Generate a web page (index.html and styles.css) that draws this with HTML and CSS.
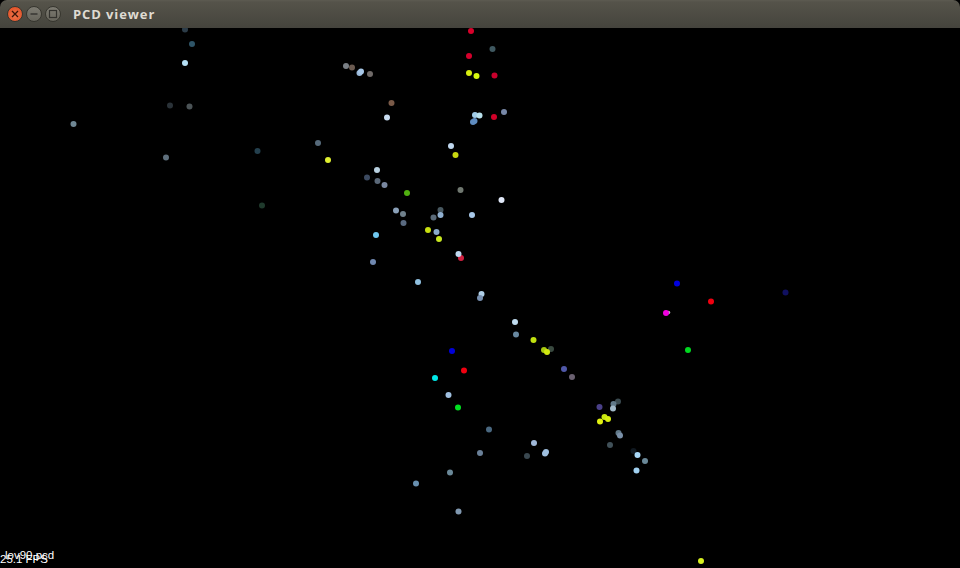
FILE: index.html
```html
<!DOCTYPE html>
<html lang="en">
<head>
<meta charset="utf-8">
<title>PCD viewer</title>
<link rel="stylesheet" href="styles.css">
</head>
<body>
<div class="window">
  <header class="titlebar">
    <div class="controls">
      <span class="btn btn-close"><svg width="10" height="10" viewBox="0 0 10 10"><path d="M2 2 8 8M8 2 2 8" stroke="#3b1508" stroke-width="1.3" fill="none"/></svg></span>
      <span class="btn"><svg width="10" height="10" viewBox="0 0 10 10"><path d="M1.5 5H8.5" stroke="#33322e" stroke-width="1.4" fill="none"/></svg></span>
      <span class="btn"><svg width="10" height="10" viewBox="0 0 10 10"><rect x="1.5" y="1.5" width="7" height="7" stroke="#33322e" stroke-width="1.2" fill="none"/></svg></span>
    </div>
    <span class="title">PCD viewer</span>
  </header>
  <main class="view">
    <svg class="cloud" width="960" height="540" viewBox="0 28 960 540">
      <circle cx="185" cy="29.5" fill="#2c3c48"/><circle cx="192" cy="44" fill="#2f5568"/>
      <circle cx="185" cy="63" fill="#b5e0f5"/><circle cx="170" cy="105.5" fill="#2a3238"/>
      <circle cx="189.5" cy="106.5" fill="#4b5356"/><circle cx="73.5" cy="124" fill="#6f8794"/>
      <circle cx="166" cy="157.5" fill="#5e6f7c"/><circle cx="257.5" cy="151" fill="#24404e"/>
      <circle cx="262" cy="205.5" fill="#1f3a2c"/><circle cx="318" cy="143" fill="#566a7a"/>
      <circle cx="328" cy="160" fill="#e0f030"/><circle cx="346" cy="66" fill="#7a7f85"/>
      <circle cx="352" cy="67.5" fill="#6a5a50"/><circle cx="359.5" cy="73" fill="#9ab8d8"/>
      <circle cx="361" cy="71.5" fill="#a8c8e8"/><circle cx="370" cy="74" fill="#6f6a68"/>
      <circle cx="391.5" cy="103" fill="#7a5a48"/><circle cx="387" cy="117.5" fill="#c8dcf0"/>
      <circle cx="471" cy="31" fill="#d8002a"/><circle cx="492.5" cy="49" fill="#3f5860"/>
      <circle cx="469" cy="56" fill="#d4002c"/><circle cx="469" cy="73" fill="#d8ee10"/>
      <circle cx="476.5" cy="76" fill="#d8f810"/><circle cx="494.5" cy="75.5" fill="#c8002c"/>
      <circle cx="473" cy="122" fill="#5f8cc0"/><circle cx="474.5" cy="121" fill="#5f8cc0"/>
      <circle cx="475" cy="115" fill="#a0cce8"/><circle cx="479.5" cy="115.5" fill="#b8e0ec"/>
      <circle cx="494" cy="117" fill="#d00028"/><circle cx="504" cy="112" fill="#7888a8"/>
      <circle cx="451" cy="146" fill="#c0d8f0"/><circle cx="455.5" cy="155" fill="#c8d810"/>
      <circle cx="377" cy="170" fill="#b8d0e0"/><circle cx="367" cy="177.5" fill="#3c4a60"/>
      <circle cx="377.5" cy="181" fill="#5a6878"/><circle cx="384.5" cy="185" fill="#7a88a0"/>
      <circle cx="407" cy="193" fill="#50b010"/><circle cx="460.5" cy="190" fill="#707870"/>
      <circle cx="501.5" cy="200" fill="#e0e8f8"/><circle cx="396" cy="210.5" fill="#8aa0b8"/>
      <circle cx="403" cy="214" fill="#70808c"/><circle cx="440.5" cy="210" fill="#485860"/>
      <circle cx="433.5" cy="217.5" fill="#5a6a78"/><circle cx="440.5" cy="215" fill="#90b0d0"/>
      <circle cx="472" cy="215" fill="#a8c8e8"/><circle cx="403.5" cy="223" fill="#5a6a80"/>
      <circle cx="428" cy="230" fill="#c8e010"/><circle cx="436.5" cy="232" fill="#88aacc"/>
      <circle cx="439" cy="239" fill="#c8e820"/><circle cx="376" cy="235" fill="#70c8f0"/>
      <circle cx="461" cy="258" fill="#d02040"/><circle cx="458.5" cy="254" fill="#c0d8f0"/>
      <circle cx="373" cy="262" fill="#7088b0"/><circle cx="418" cy="282" fill="#90c0e0"/>
      <circle cx="481.5" cy="294" fill="#b0d0e8"/><circle cx="480" cy="298" fill="#7890b0"/>
      <circle cx="515" cy="322" fill="#c0dcf0"/><circle cx="516" cy="334.5" fill="#6888a0"/>
      <circle cx="533.5" cy="340" fill="#c0e010"/><circle cx="551" cy="349" fill="#3a4a40"/>
      <circle cx="544" cy="350" fill="#a8c810"/><circle cx="547" cy="352" fill="#d0e810"/>
      <circle cx="452" cy="351" fill="#0000d8"/><circle cx="677" cy="283.5" fill="#0000e0"/>
      <circle cx="711" cy="301.5" fill="#f00010"/><circle cx="785.5" cy="292.5" fill="#101060"/>
      <circle class="speck" cx="668.5" cy="312.5" fill="#aaaaaa"/><circle cx="666" cy="313" fill="#f000e0"/>
      <circle cx="688" cy="350" fill="#00d820"/><circle cx="464" cy="370.5" fill="#f00010"/>
      <circle cx="435" cy="378" fill="#00e8e8"/><circle cx="564" cy="369" fill="#5058a8"/>
      <circle cx="572" cy="377" fill="#6a6070"/><circle cx="448.5" cy="395" fill="#a0c0e0"/>
      <circle cx="458" cy="407.5" fill="#00e020"/><circle cx="489" cy="429.5" fill="#4a6880"/>
      <circle cx="599.5" cy="407" fill="#4a4088"/><circle cx="618" cy="401.5" fill="#3a4a50"/>
      <circle cx="613.5" cy="404" fill="#607888"/><circle cx="613" cy="408.5" fill="#a0b8c8"/>
      <circle cx="604.5" cy="417" fill="#c8e810"/><circle cx="608" cy="419" fill="#d8f010"/>
      <circle cx="600" cy="421.5" fill="#e0f010"/><circle cx="618.5" cy="433" fill="#607888"/>
      <circle cx="620" cy="435.5" fill="#7a90a8"/><circle cx="610" cy="445" fill="#405058"/>
      <circle cx="633.5" cy="451" fill="#101820"/><circle cx="637.5" cy="455" fill="#a8d8f8"/>
      <circle cx="645" cy="461" fill="#6a8898"/><circle cx="636.5" cy="470.5" fill="#a0d0f0"/>
      <circle cx="480" cy="453" fill="#6a8098"/><circle cx="534" cy="443" fill="#a0b8d8"/>
      <circle cx="527" cy="456" fill="#3a4850"/><circle cx="545" cy="453.5" fill="#a0c0e0"/>
      <circle cx="546" cy="452" fill="#a0c0e0"/><circle cx="450" cy="472.5" fill="#6a8898"/>
      <circle cx="416" cy="483.5" fill="#6890b0"/><circle cx="458.5" cy="511.5" fill="#8098b0"/>
      <circle cx="701" cy="561" fill="#d8f020"/>
    </svg>
    <span class="overlay overlay-file">lov90.pcd</span>
    <span class="overlay overlay-fps">25.1 FPS</span>
  </main>
</div>
</body>
</html>
```
FILE: styles.css
```css
html, body {
  margin: 0;
  padding: 0;
  background: #000;
}
.window {
  width: 960px;
  height: 568px;
  display: flex;
  flex-direction: column;
  overflow: hidden;
  background: #000;
}
.titlebar {
  height: 28px;
  flex: none;
  display: flex;
  align-items: center;
  gap: 12px;
  padding: 0 0 0 7px;
  box-sizing: border-box;
  background: linear-gradient(#5d5b51 0, #55534a 2px, #45443d 100%);
  border-radius: 7px 7px 0 0;
}
.controls {
  display: flex;
  gap: 3px;
}
.btn {
  width: 16px;
  height: 16px;
  box-sizing: border-box;
  border-radius: 50%;
  display: flex;
  align-items: center;
  justify-content: center;
  background: linear-gradient(#7d7b72, #66645b);
  border: 0.5px solid #37362f;
}
.btn-close {
  background: radial-gradient(circle at 50% 60%, #f0744a, #dd4a20);
}
.title {
  font-family: "Open Sans", "Noto Sans", sans-serif;
  font-weight: 700;
  font-size: 13px;
  letter-spacing: 0.9px;
  color: #dfdbd2;
}
.view {
  position: relative;
  flex: 1;
  background: #000;
}
.cloud {
  display: block;
  filter: blur(0.35px);
}
.cloud circle {
  r: 3px;
}
.cloud .speck {
  r: 1.8px;
}
.overlay {
  position: absolute;
  font-family: "Liberation Sans", Arial, sans-serif;
  color: #fff;
  line-height: 12px;
  white-space: nowrap;
}
.overlay-file {
  left: 5px;
  top: 521px;
  font-size: 11.5px;
}
.overlay-fps {
  left: 0;
  top: 525px;
  font-size: 11.5px;
}
```
